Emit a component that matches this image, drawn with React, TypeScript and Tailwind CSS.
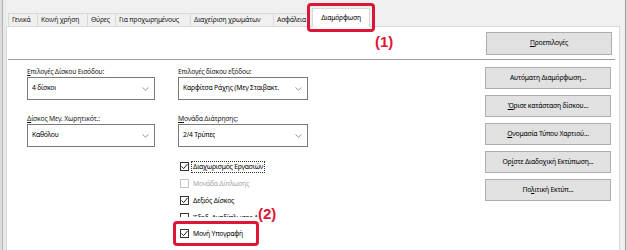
import React from "react";

const font = { fontFamily: '"Noto Sans", "Open Sans", sans-serif' };

function Chevron() {
  return (
    <svg width="7" height="4" viewBox="0 0 7 4" className="shrink-0">
      <polyline points="0.5,0.5 3.5,3.2 6.5,0.5" fill="none" stroke="#8a8a8a" strokeWidth="0.9" />
    </svg>
  );
}

function Select({ label, value }: { label: React.ReactNode; value: string }) {
  return (
    <div className="flex flex-col">
      <div className="h-[10px] leading-[10px] text-[6.8px] tracking-[-0.2px] text-[#1a1a1a] whitespace-nowrap">
        {label}
      </div>
      <div className="h-[23px] border border-[#7a7a7a] bg-white flex items-center justify-between pl-[4px] pr-[5px]">
        <span className="text-[6.8px] tracking-[-0.2px] text-black whitespace-nowrap overflow-hidden">{value}</span>
        <Chevron />
      </div>
    </div>
  );
}

function Check({
  label,
  checked,
  disabled,
  focus,
}: {
  label: string;
  checked?: boolean;
  disabled?: boolean;
  focus?: boolean;
}) {
  return (
    <div className="h-[17px] flex items-center gap-[2px] pl-[2px]">
      <div
        className={
          "w-[9px] h-[9px] border bg-white flex items-center justify-center shrink-0 " +
          (disabled ? "border-[#c4c4c4]" : "border-[#333333]")
        }
      >
        {checked && (
          <svg width="7" height="7" viewBox="0 0 7 7">
            <polyline points="0.5,3.5 2.6,5.6 6.5,1" fill="none" stroke="#222" strokeWidth="1" />
          </svg>
        )}
      </div>
      <span
        className={
          "text-[6.8px] tracking-[-0.2px] leading-[10px] whitespace-nowrap px-[1px] " +
          (disabled ? "text-[#a6a6a6]" : "text-black") +
          (focus ? " border border-dotted border-[#333]" : " border border-transparent")
        }
      >
        {label}
      </span>
    </div>
  );
}

function Btn({ children }: { children: React.ReactNode }) {
  return (
    <div className="w-[126px] h-[22px] bg-[#e1e1e1] border border-[#adadad] flex items-center justify-center text-[6.8px] tracking-[-0.2px] text-black whitespace-nowrap">
      {children}
    </div>
  );
}

const tabs = [
  { t: "Γενικά", w: "w-[29px]" },
  { t: "Κοινή χρήση", w: "w-[50px]" },
  { t: "Θύρες", w: "w-[28px]" },
  { t: "Για προχωρημένους", w: "w-[75px]" },
  { t: "Διαχείριση χρωμάτων", w: "w-[83px]" },
  { t: "Ασφάλεια", w: "w-[34px]" },
];

export default function App() {
  return (
    <div style={font} className="relative w-[627px] h-[250px] bg-[#f0f0f0] flex overflow-hidden">
      {/* left window edge */}
      <div className="w-[6px] h-full flex">
        <div className="w-[2px] bg-[#dcdcdc]" />
        <div className="w-px bg-[#b4b4b4]" />
        <div className="w-[3px] bg-[#e9e9e9]" />
      </div>

      <div className="w-[614px] flex flex-col pt-[13px]">
        {/* tab strip */}
        <div className="h-[13px] flex pl-[2px] items-end">
          {tabs.map((tab) => (
            <div
              key={tab.t}
              className={
                tab.w +
                " h-[13px] border-t border-l border-[#d9d9d9] bg-[#f0f0f0] flex items-center pl-[3px] overflow-hidden whitespace-nowrap text-[6.8px] tracking-[-0.2px] text-[#1a1a1a]"
              }
            >
              {tab.t}
            </div>
          ))}
          <div className="w-[2px] h-[13px] border-l border-[#d9d9d9]" />
          <div className="w-[58px] h-[19px] -mb-px bg-white border-t border-l border-r border-[#d9d9d9] flex items-center justify-center ml-[3px] text-[6.8px] tracking-[-0.2px] text-black z-10">
            Διαμόρφωση
          </div>
        </div>

        {/* panel */}
        <div className="flex-1 bg-white border border-[#d9d9d9] border-b-0 flex flex-col">
          <div className="h-[32px] flex justify-end pr-[7px] pt-[5px]">
            <div className="w-[126px] h-[23px] bg-[#e1e1e1] border border-[#adadad] flex items-center justify-center text-[6.8px] tracking-[-0.2px] text-black">
              <span>
                <span className="underline">Π</span>ροεπιλογές
              </span>
            </div>
          </div>
          <div className="h-px bg-[#a0a0a0] ml-px mr-[4px]" />

          <div className="flex pl-[20px]">
            <div className="w-[128px] flex flex-col pt-[7px] gap-[14px]">
              <Select label={<><span className="underline">Ε</span>πιλογές Δίσκου Εισόδου:</>} value="4 δίσκοι" />
              <Select label={<><span className="underline">Δ</span>ίσκος Μεγ. Χωρητικότ.:</>} value="Καθόλου" />
            </div>

            <div className="w-[130px] ml-[23px] flex flex-col pt-[7px]">
              <Select label="Επιλογές δίσκου εξόδου:" value="Καρφίτσα Ράχης (Μεγ Σταιβακτ." />
              <div className="h-[14px]" />
              <Select label={<><span className="underline">Μ</span>ονάδα Διάτρησης:</>} value="2/4 Τρύπες" />
              <div className="mt-[11px] flex flex-col">
                <Check label="Διαχωρισμός Εργασιών" checked focus />
                <Check label="Μονάδα Δίπλωσης" disabled />
                <Check label="Δεξιός Δίσκος" checked />
                <Check label="Έξοδ. Αναδίπλωσης Α" />
                {/* white mask that hides the lower half of the row above */}
                <div className="relative -mt-[9px] -ml-[5px] w-[90px] bg-white pt-[4px]">
                  <div className="w-[86px] h-[25px] bg-white border-[3px] border-[#dc1636] rounded-[4px] flex items-center pl-[2px]">
                    <Check label="Μονή Υπογραφή" checked />
                  </div>
                </div>
              </div>
            </div>

            <div className="ml-auto mr-[8px] pt-[7px] flex flex-col gap-[6px]">
              <Btn>Αυτόματη Διαμόρφωση...</Btn>
              <Btn>
                <span>
                  <span className="underline">Ό</span>ρισε κατάσταση δίσκου...
                </span>
              </Btn>
              <Btn>
                <span>
                  <span className="underline">Ο</span>νομασία Τύπου Χαρτιού...
                </span>
              </Btn>
              <Btn>
                <span>
                  Ορ<span className="underline">ί</span>στε Διαδοχική Εκτύπωση...
                </span>
              </Btn>
              <Btn>
                <span>
                  Πο<span className="underline">λ</span>ιτική Εκτύπ...
                </span>
              </Btn>
            </div>
          </div>
        </div>
      </div>

      {/* right window edge */}
      <div className="w-[7px] h-full flex">
        <div className="w-[5px] bg-[#f0f0f0]" />
        <div className="w-px bg-[#9a9a9a]" />
        <div className="w-px bg-[#dadada]" />
      </div>

      {/* annotations */}
      <div className="absolute left-[307px] top-[3px] w-[68px] h-[29px] border-[3px] border-[#dc1636] rounded-[4px]" />
      <div className="absolute left-[375px] top-[34px] text-[15px] leading-[15px] font-bold text-[#dc1636]" style={{ fontFamily: '"Liberation Sans", Arial, sans-serif' }}>
        (1)
      </div>
      <div className="absolute left-[258px] top-[206px] text-[15px] leading-[15px] font-bold text-[#dc1636]" style={{ fontFamily: '"Liberation Sans", Arial, sans-serif' }}>
        (2)
      </div>
    </div>
  );
}
